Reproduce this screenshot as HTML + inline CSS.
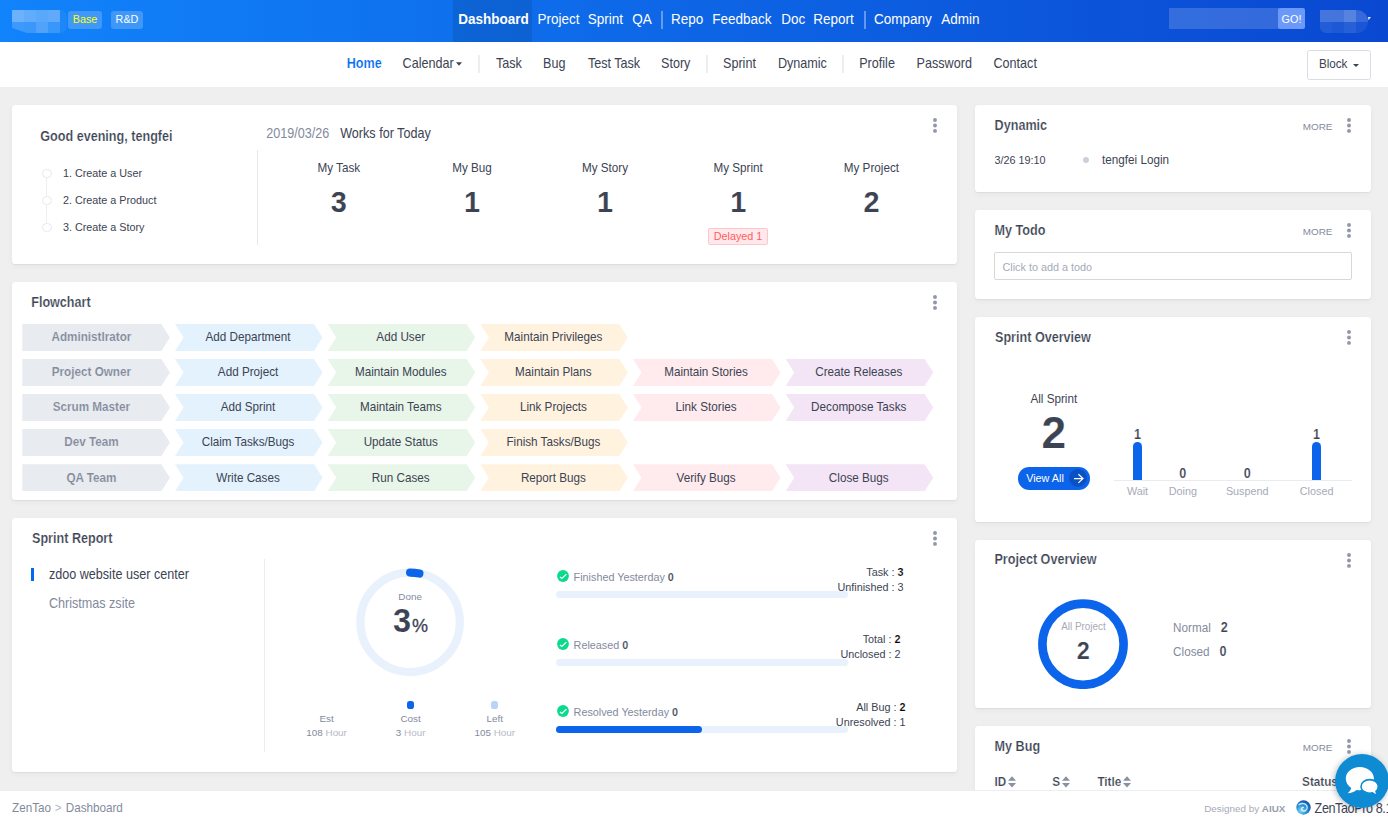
<!DOCTYPE html>
<html lang="en">
<head>
<meta charset="utf-8">
<title>Dashboard - ZenTao</title>
<style>
*{box-sizing:border-box}
html,body{margin:0;padding:0}
body{width:1388px;height:820px;overflow:hidden;position:relative;background:#efefef;color:#3c4353;font-family:"Liberation Sans",Arial,sans-serif;font-size:11.7px;line-height:1.2}
a{color:inherit;text-decoration:none}
ul{list-style:none;margin:0;padding:0}
.abs{position:absolute;white-space:nowrap}
b,strong{font-weight:bold}

/* header */
#header{position:absolute;left:0;top:0;width:1388px;height:42px;background:linear-gradient(90deg,#1183fb 0%,#0a48d1 100%)}
#logo{position:absolute;left:12px;top:10px;width:55px;height:23px;overflow:hidden;clip-path:polygon(0 0,100% 0,100% 100%,15px 100%,0 18px)}
#logo i{position:absolute;display:block}
.hbadge{position:absolute;top:11px;height:18px;line-height:16.4px;border-radius:3px;background:rgba(255,255,255,.2);font-size:10.8px;text-align:center;color:#fff}
#navbar{position:absolute;left:0;top:0;height:42px;font-size:13.5px;color:#fff}
#navbar li{display:block;position:absolute;top:0;height:42px;line-height:38px;white-space:nowrap}
#navbar li a{display:block;height:42px;transform:translateY(.45px) scaleY(1.11);transform-origin:50% 19px}
#navbar li.active{background:rgba(0,0,0,.1);font-weight:bold}
#navbar li.divider{width:2px;height:18px;top:11px;background:rgba(255,255,255,.36)}
#searchbox{position:absolute;left:1169px;top:8px;width:110px;height:21px;background:rgba(255,255,255,.17)}
#searchgo{position:absolute;left:1278px;top:8px;width:27px;height:21px;background:#6b99fa;border-radius:2px;color:#fff;font-size:10.8px;line-height:22px;text-align:center}
#userblur{position:absolute;left:1320px;top:10px;width:48.4px;height:23px;overflow:hidden;border-radius:0 12px 12px 6px}
#userblur i{position:absolute;display:block}

/* sub nav */
#subHeader{position:absolute;left:0;top:42px;width:1388px;height:45px;background:#fff}
#subNavbar{position:absolute;left:0;top:0;height:45px;font-size:12.6px;color:#3c4353}
#subNavbar li{display:block;position:absolute;top:0;height:45px;line-height:43px;white-space:nowrap}
#subNavbar li a{display:block;height:45px;transform:translateY(.5px) scaleY(1.11);transform-origin:50% 21.5px}
#subNavbar li.active a{color:#006af1;font-weight:bold;-webkit-text-stroke:.18px #fff}
#subNavbar li.divider{width:2px;height:18px;top:13px;background:#eee}
.caret{display:inline-block;width:0;height:0;border-left:3.6px solid transparent;border-right:3.6px solid transparent;border-top:3.6px solid currentColor;vertical-align:middle;margin-left:2px}
#blockBtn{position:absolute;left:1307px;top:8px;width:64px;height:30px;border:1px solid #dadde5;border-radius:2.5px;background:#fff;font-size:11.7px;line-height:25.4px;text-align:center;color:#3c4353}
#blockBtn span.tx{display:inline-block;transform:scaleY(1.11)}

/* panels */
.panel{position:absolute;background:#fff;border-radius:3.6px;box-shadow:0 1px 1px rgba(0,0,0,.05),0 2px 6px 0 rgba(0,0,0,.045)}
.panel-title{position:absolute;font-weight:bold;font-size:12.6px;color:#3c4353;white-space:nowrap;line-height:16px}
.more{position:absolute;font-size:9.9px;color:#838a9d;line-height:12px;letter-spacing:0}
.dots{position:absolute;fill:#9196a8;overflow:visible}


.flow-item{font-size:11.7px;line-height:27px;text-align:center;white-space:nowrap;color:#3c4353}
.flow-item span{display:inline-block;transform:translateY(-1.1px) scaleY(1.11);transform-origin:50% 50%}
.sort{display:inline-block;position:relative;width:8px;height:10px;margin-left:2px;vertical-align:-1px}
.sort:before,.sort:after{content:"";position:absolute;left:0;width:0;height:0;border-left:4px solid transparent;border-right:4px solid transparent}
.sort:before{top:0;border-bottom:4.2px solid #8a90a3}
.sort:after{bottom:0;border-top:4.2px solid #8a90a3}
h4{margin:0}
/* footer */
#footer{position:absolute;left:0;top:790px;width:1388px;height:30px;background:#fff;border-top:1px solid #eceef3;font-size:11.7px;color:#838a9d}
#chat{position:absolute;left:1335.2px;top:754px;width:54px;height:54px;border-radius:50%;box-shadow:-1px 1px 6px rgba(0,0,0,.28)}
#chat svg{display:block}
</style>
</head>
<body>
<div id="header">
  <div id="logo"><i style="left:0px;top:0px;width:12px;height:12px;background:rgba(255,255,255,0.38)"></i><i style="left:12px;top:0px;width:12px;height:12px;background:rgba(255,255,255,0.34)"></i><i style="left:24px;top:0px;width:12px;height:12px;background:rgba(255,255,255,0.31)"></i><i style="left:36px;top:0px;width:12px;height:12px;background:rgba(255,255,255,0.33)"></i><i style="left:0px;top:12px;width:12px;height:11px;background:rgba(255,255,255,0.19)"></i><i style="left:12px;top:12px;width:12px;height:11px;background:rgba(255,255,255,0.18)"></i><i style="left:24px;top:12px;width:12px;height:11px;background:rgba(255,255,255,0.265)"></i><i style="left:36px;top:12px;width:12px;height:11px;background:rgba(255,255,255,0.17)"></i><i style="left:48px;top:0;width:7px;height:23px;background:rgba(255,255,255,.05);border-radius:0 7px 7px 0"></i></div>
  <a class="hbadge" style="left:68px;width:34px;color:#ffff00">Base</a>
  <a class="hbadge" style="left:111px;width:32px">R&amp;D</a>
  <ul id="navbar">
    <li class="active" style="left:453px;width:78.9px;padding-left:5.2px"><a>Dashboard</a></li>
    <li style="left:537.4px"><a>Project</a></li>
    <li style="left:587.8px"><a>Sprint</a></li>
    <li style="left:632.3px"><a>QA</a></li>
    <li class="divider" style="left:661px"></li>
    <li style="left:671.1px"><a>Repo</a></li>
    <li style="left:712.2px"><a>Feedback</a></li>
    <li style="left:781.2px"><a>Doc</a></li>
    <li style="left:813.3px"><a>Report</a></li>
    <li class="divider" style="left:864px"></li>
    <li style="left:873.9px"><a>Company</a></li>
    <li style="left:941.2px"><a>Admin</a></li>
  </ul>
  <div id="searchbox"></div>
  <a id="searchgo">GO!</a>
  <div id="userblur"><i style="left:0.0px;top:0px;width:12.1px;height:12px;background:rgba(255,255,255,0.24)"></i><i style="left:12.1px;top:0px;width:12.1px;height:12px;background:rgba(255,255,255,0.24)"></i><i style="left:24.2px;top:0px;width:12.1px;height:12px;background:rgba(255,255,255,0.315)"></i><i style="left:36.3px;top:0px;width:12.1px;height:12px;background:rgba(255,255,255,0.18)"></i><i style="left:0.0px;top:12px;width:12.1px;height:11px;background:rgba(255,255,255,0.1)"></i><i style="left:12.1px;top:12px;width:12.1px;height:11px;background:rgba(255,255,255,0.08)"></i><i style="left:24.2px;top:12px;width:12.1px;height:11px;background:rgba(255,255,255,0.12)"></i><i style="left:36.3px;top:12px;width:12.1px;height:11px;background:rgba(255,255,255,0.07)"></i></div>
  <svg class="abs" style="left:1367px;top:16px" width="6" height="6" viewBox="0 0 6 6"><path d="M0.8 1.1 H4 L1.6 4.3 Z" fill="#dfe8fb"/></svg>
</div>

<div id="subHeader">
  <ul id="subNavbar">
    <li class="active" style="left:346.7px"><a>Home</a></li>
    <li style="left:402.6px"><a>Calendar<span class="caret"></span></a></li>
    <li class="divider" style="left:477.9px"></li>
    <li style="left:495.9px"><a>Task</a></li>
    <li style="left:543px"><a>Bug</a></li>
    <li style="left:587.9px"><a>Test Task</a></li>
    <li style="left:661px"><a>Story</a></li>
    <li class="divider" style="left:705.9px"></li>
    <li style="left:723px"><a>Sprint</a></li>
    <li style="left:777.9px"><a>Dynamic</a></li>
    <li class="divider" style="left:842.1px"></li>
    <li style="left:859.2px"><a>Profile</a></li>
    <li style="left:916.6px"><a>Password</a></li>
    <li style="left:993.5px"><a>Contact</a></li>
  </ul>
  <a id="blockBtn"><span class="tx">Block</span> <span class="caret" style="margin-left:2.4px;vertical-align:1px"></span></a>
</div>


<div id="main">
<div class="panel block-welcome" style="left:12px;top:105px;width:945px;height:159px">
<h4 class="abs" style="top:23.20px;font-size:12.6px;line-height:16px;color:#3c4353;font-weight:bold;-webkit-text-stroke:0.18px #fff;left:28.30px;transform:translateY(0.9px) scaleY(1.11);transform-origin:50% 50%;margin:0;">Good evening, tengfei</h4>
<div style="position:absolute;left:34.30px;top:68.00px;width:1.00px;height:54.00px;background:#eee"></div>
<ul class="tutorial">
<li><i style="position:absolute;left:30.00px;top:63.60px;width:9.60px;height:9.60px;border:1px solid #e9e9e9;border-radius:50%;background:#fff"></i><span class="abs" style="top:60.00px;font-size:10.8px;line-height:16px;color:#3c4353;left:50.90px;">1. Create a User</span></li>
<li><i style="position:absolute;left:30.00px;top:90.60px;width:9.60px;height:9.60px;border:1px solid #e9e9e9;border-radius:50%;background:#fff"></i><span class="abs" style="top:87.00px;font-size:10.8px;line-height:16px;color:#3c4353;left:50.90px;">2. Create a Product</span></li>
<li><i style="position:absolute;left:30.00px;top:117.60px;width:9.60px;height:9.60px;border:1px solid #e9e9e9;border-radius:50%;background:#fff"></i><span class="abs" style="top:114.00px;font-size:10.8px;line-height:16px;color:#3c4353;left:50.90px;">3. Create a Story</span></li>
</ul>
<div style="position:absolute;left:245.00px;top:45.00px;width:1.00px;height:95.00px;background:#e5e8ec"></div>
<span class="abs" style="top:20.30px;font-size:12.6px;line-height:16px;color:#838a9d;left:254.20px;transform:translateY(0.9px) scaleY(1.11);transform-origin:50% 50%;">2019/03/26</span>
<span class="abs" style="top:20.30px;font-size:12.6px;line-height:16px;color:#3c4353;left:328.20px;transform:translateY(0.9px) scaleY(1.11);transform-origin:50% 50%;">Works for Today</span>
<div class="tile"><span class="abs" style="top:53.80px;font-size:11.7px;line-height:16px;color:#3c4353;left:126.80px;width:400px;text-align:center;transform:translateY(0.9px) scaleY(1.11);transform-origin:50% 50%;">My Task</span><strong class="abs" style="top:78.70px;font-size:28.8px;line-height:34px;color:#3c4353;font-weight:bold;-webkit-text-stroke:0.12px #fff;left:126.80px;width:400px;text-align:center;transform:translateY(0.9px) scaleY(1.05);transform-origin:50% 50%;">3</strong></div>
<div class="tile"><span class="abs" style="top:53.80px;font-size:11.7px;line-height:16px;color:#3c4353;left:260.00px;width:400px;text-align:center;transform:translateY(0.9px) scaleY(1.11);transform-origin:50% 50%;">My Bug</span><strong class="abs" style="top:78.70px;font-size:28.8px;line-height:34px;color:#3c4353;font-weight:bold;-webkit-text-stroke:0.12px #fff;left:260.00px;width:400px;text-align:center;transform:translateY(0.9px) scaleY(1.05);transform-origin:50% 50%;">1</strong></div>
<div class="tile"><span class="abs" style="top:53.80px;font-size:11.7px;line-height:16px;color:#3c4353;left:393.00px;width:400px;text-align:center;transform:translateY(0.9px) scaleY(1.11);transform-origin:50% 50%;">My Story</span><strong class="abs" style="top:78.70px;font-size:28.8px;line-height:34px;color:#3c4353;font-weight:bold;-webkit-text-stroke:0.12px #fff;left:393.00px;width:400px;text-align:center;transform:translateY(0.9px) scaleY(1.05);transform-origin:50% 50%;">1</strong></div>
<div class="tile"><span class="abs" style="top:53.80px;font-size:11.7px;line-height:16px;color:#3c4353;left:526.20px;width:400px;text-align:center;transform:translateY(0.9px) scaleY(1.11);transform-origin:50% 50%;">My Sprint</span><strong class="abs" style="top:78.70px;font-size:28.8px;line-height:34px;color:#3c4353;font-weight:bold;-webkit-text-stroke:0.12px #fff;left:526.20px;width:400px;text-align:center;transform:translateY(0.9px) scaleY(1.05);transform-origin:50% 50%;">1</strong></div>
<div class="tile"><span class="abs" style="top:53.80px;font-size:11.7px;line-height:16px;color:#3c4353;left:659.40px;width:400px;text-align:center;transform:translateY(0.9px) scaleY(1.11);transform-origin:50% 50%;">My Project</span><strong class="abs" style="top:78.70px;font-size:28.8px;line-height:34px;color:#3c4353;font-weight:bold;-webkit-text-stroke:0.12px #fff;left:659.40px;width:400px;text-align:center;transform:translateY(0.9px) scaleY(1.05);transform-origin:50% 50%;">2</strong></div>
<span style="position:absolute;left:696.00px;top:123.00px;width:60.00px;height:17.00px;border:1px solid #ffc6c9;background:#ffe9ec;border-radius:2px;color:#ff5d5d;font-size:10.8px;line-height:15px;text-align:center">Delayed 1</span>
<svg class="dots" style="left:919.70px;top:12.20px" width="6" height="17" viewBox="0 0 6 17"><circle cx="3" cy="3" r="1.95"/><circle cx="3" cy="8.45" r="1.95"/><circle cx="3" cy="13.9" r="1.95"/></svg>
</div>
<div class="panel block-flowchart" style="left:12px;top:282px;width:945px;height:218px">
<h4 class="abs" style="top:12.30px;font-size:12.6px;line-height:16px;color:#3c4353;font-weight:bold;-webkit-text-stroke:0.18px #fff;left:19.20px;transform:translateY(0.9px) scaleY(1.11);transform-origin:50% 50%;margin:0;">Flowchart</h4>
<div class="flow-row">
<div class="flow-item" style="position:absolute;left:10.30px;top:42.00px;width:147.60px;height:27.00px;background:#e8ebef;clip-path:polygon(0 0,139px 0,147.6px 50%,139px 100%,0 100%);color:#838a9d;font-weight:bold;-webkit-text-stroke:.12px #e8ebef;padding-right:9.4px;"><span>AdministIrator</span></div>
<div class="flow-item" style="position:absolute;left:162.97px;top:42.00px;width:147.60px;height:27.00px;background:#e3f2fd;clip-path:polygon(0 0,139px 0,147.6px 50%,139px 100%,0 100%,8.6px 50%);padding-left:7.2px;padding-right:8.6px;"><span>Add Department</span></div>
<div class="flow-item" style="position:absolute;left:315.64px;top:42.00px;width:147.60px;height:27.00px;background:#e8f5e9;clip-path:polygon(0 0,139px 0,147.6px 50%,139px 100%,0 100%,8.6px 50%);padding-left:7.2px;padding-right:8.6px;"><span>Add User</span></div>
<div class="flow-item" style="position:absolute;left:468.31px;top:42.00px;width:147.60px;height:27.00px;background:#fff3e0;clip-path:polygon(0 0,139px 0,147.6px 50%,139px 100%,0 100%,8.6px 50%);padding-left:7.2px;padding-right:8.6px;"><span>Maintain Privileges</span></div>
</div>
<div class="flow-row">
<div class="flow-item" style="position:absolute;left:10.30px;top:77.00px;width:147.60px;height:27.00px;background:#e8ebef;clip-path:polygon(0 0,139px 0,147.6px 50%,139px 100%,0 100%);color:#838a9d;font-weight:bold;-webkit-text-stroke:.12px #e8ebef;padding-right:9.4px;"><span>Project Owner</span></div>
<div class="flow-item" style="position:absolute;left:162.97px;top:77.00px;width:147.60px;height:27.00px;background:#e3f2fd;clip-path:polygon(0 0,139px 0,147.6px 50%,139px 100%,0 100%,8.6px 50%);padding-left:7.2px;padding-right:8.6px;"><span>Add Project</span></div>
<div class="flow-item" style="position:absolute;left:315.64px;top:77.00px;width:147.60px;height:27.00px;background:#e8f5e9;clip-path:polygon(0 0,139px 0,147.6px 50%,139px 100%,0 100%,8.6px 50%);padding-left:7.2px;padding-right:8.6px;"><span>Maintain Modules</span></div>
<div class="flow-item" style="position:absolute;left:468.31px;top:77.00px;width:147.60px;height:27.00px;background:#fff3e0;clip-path:polygon(0 0,139px 0,147.6px 50%,139px 100%,0 100%,8.6px 50%);padding-left:7.2px;padding-right:8.6px;"><span>Maintain Plans</span></div>
<div class="flow-item" style="position:absolute;left:620.98px;top:77.00px;width:147.60px;height:27.00px;background:#ffebee;clip-path:polygon(0 0,139px 0,147.6px 50%,139px 100%,0 100%,8.6px 50%);padding-left:7.2px;padding-right:8.6px;"><span>Maintain Stories</span></div>
<div class="flow-item" style="position:absolute;left:773.65px;top:77.00px;width:147.60px;height:27.00px;background:#f3e5f5;clip-path:polygon(0 0,139px 0,147.6px 50%,139px 100%,0 100%,8.6px 50%);padding-left:7.2px;padding-right:8.6px;"><span>Create Releases</span></div>
</div>
<div class="flow-row">
<div class="flow-item" style="position:absolute;left:10.30px;top:112.00px;width:147.60px;height:27.00px;background:#e8ebef;clip-path:polygon(0 0,139px 0,147.6px 50%,139px 100%,0 100%);color:#838a9d;font-weight:bold;-webkit-text-stroke:.12px #e8ebef;padding-right:9.4px;"><span>Scrum Master</span></div>
<div class="flow-item" style="position:absolute;left:162.97px;top:112.00px;width:147.60px;height:27.00px;background:#e3f2fd;clip-path:polygon(0 0,139px 0,147.6px 50%,139px 100%,0 100%,8.6px 50%);padding-left:7.2px;padding-right:8.6px;"><span>Add Sprint</span></div>
<div class="flow-item" style="position:absolute;left:315.64px;top:112.00px;width:147.60px;height:27.00px;background:#e8f5e9;clip-path:polygon(0 0,139px 0,147.6px 50%,139px 100%,0 100%,8.6px 50%);padding-left:7.2px;padding-right:8.6px;"><span>Maintain Teams</span></div>
<div class="flow-item" style="position:absolute;left:468.31px;top:112.00px;width:147.60px;height:27.00px;background:#fff3e0;clip-path:polygon(0 0,139px 0,147.6px 50%,139px 100%,0 100%,8.6px 50%);padding-left:7.2px;padding-right:8.6px;"><span>Link Projects</span></div>
<div class="flow-item" style="position:absolute;left:620.98px;top:112.00px;width:147.60px;height:27.00px;background:#ffebee;clip-path:polygon(0 0,139px 0,147.6px 50%,139px 100%,0 100%,8.6px 50%);padding-left:7.2px;padding-right:8.6px;"><span>Link Stories</span></div>
<div class="flow-item" style="position:absolute;left:773.65px;top:112.00px;width:147.60px;height:27.00px;background:#f3e5f5;clip-path:polygon(0 0,139px 0,147.6px 50%,139px 100%,0 100%,8.6px 50%);padding-left:7.2px;padding-right:8.6px;"><span>Decompose Tasks</span></div>
</div>
<div class="flow-row">
<div class="flow-item" style="position:absolute;left:10.30px;top:147.00px;width:147.60px;height:27.00px;background:#e8ebef;clip-path:polygon(0 0,139px 0,147.6px 50%,139px 100%,0 100%);color:#838a9d;font-weight:bold;-webkit-text-stroke:.12px #e8ebef;padding-right:9.4px;"><span>Dev Team</span></div>
<div class="flow-item" style="position:absolute;left:162.97px;top:147.00px;width:147.60px;height:27.00px;background:#e3f2fd;clip-path:polygon(0 0,139px 0,147.6px 50%,139px 100%,0 100%,8.6px 50%);padding-left:7.2px;padding-right:8.6px;"><span>Claim Tasks/Bugs</span></div>
<div class="flow-item" style="position:absolute;left:315.64px;top:147.00px;width:147.60px;height:27.00px;background:#e8f5e9;clip-path:polygon(0 0,139px 0,147.6px 50%,139px 100%,0 100%,8.6px 50%);padding-left:7.2px;padding-right:8.6px;"><span>Update Status</span></div>
<div class="flow-item" style="position:absolute;left:468.31px;top:147.00px;width:147.60px;height:27.00px;background:#fff3e0;clip-path:polygon(0 0,139px 0,147.6px 50%,139px 100%,0 100%,8.6px 50%);padding-left:7.2px;padding-right:8.6px;"><span>Finish Tasks/Bugs</span></div>
</div>
<div class="flow-row">
<div class="flow-item" style="position:absolute;left:10.30px;top:182.30px;width:147.60px;height:27.00px;background:#e8ebef;clip-path:polygon(0 0,139px 0,147.6px 50%,139px 100%,0 100%);color:#838a9d;font-weight:bold;-webkit-text-stroke:.12px #e8ebef;padding-right:9.4px;"><span style="transform:translateY(-0.2px) scaleY(1.11)">QA Team</span></div>
<div class="flow-item" style="position:absolute;left:162.97px;top:182.30px;width:147.60px;height:27.00px;background:#e3f2fd;clip-path:polygon(0 0,139px 0,147.6px 50%,139px 100%,0 100%,8.6px 50%);padding-left:7.2px;padding-right:8.6px;"><span style="transform:translateY(-0.2px) scaleY(1.11)">Write Cases</span></div>
<div class="flow-item" style="position:absolute;left:315.64px;top:182.30px;width:147.60px;height:27.00px;background:#e8f5e9;clip-path:polygon(0 0,139px 0,147.6px 50%,139px 100%,0 100%,8.6px 50%);padding-left:7.2px;padding-right:8.6px;"><span style="transform:translateY(-0.2px) scaleY(1.11)">Run Cases</span></div>
<div class="flow-item" style="position:absolute;left:468.31px;top:182.30px;width:147.60px;height:27.00px;background:#fff3e0;clip-path:polygon(0 0,139px 0,147.6px 50%,139px 100%,0 100%,8.6px 50%);padding-left:7.2px;padding-right:8.6px;"><span style="transform:translateY(-0.2px) scaleY(1.11)">Report Bugs</span></div>
<div class="flow-item" style="position:absolute;left:620.98px;top:182.30px;width:147.60px;height:27.00px;background:#ffebee;clip-path:polygon(0 0,139px 0,147.6px 50%,139px 100%,0 100%,8.6px 50%);padding-left:7.2px;padding-right:8.6px;"><span style="transform:translateY(-0.2px) scaleY(1.11)">Verify Bugs</span></div>
<div class="flow-item" style="position:absolute;left:773.65px;top:182.30px;width:147.60px;height:27.00px;background:#f3e5f5;clip-path:polygon(0 0,139px 0,147.6px 50%,139px 100%,0 100%,8.6px 50%);padding-left:7.2px;padding-right:8.6px;"><span style="transform:translateY(-0.2px) scaleY(1.11)">Close Bugs</span></div>
</div>
<svg class="dots" style="left:919.70px;top:12.20px" width="6" height="17" viewBox="0 0 6 17"><circle cx="3" cy="3" r="1.95"/><circle cx="3" cy="8.45" r="1.95"/><circle cx="3" cy="13.9" r="1.95"/></svg>
</div>
<div class="panel block-statistic" style="left:12px;top:518px;width:945px;height:254px">
<h4 class="abs" style="top:12.30px;font-size:12.6px;line-height:16px;color:#3c4353;font-weight:bold;-webkit-text-stroke:0.18px #fff;left:20.00px;transform:translateY(0.9px) scaleY(1.11);transform-origin:50% 50%;margin:0;">Sprint Report</h4>
<div style="position:absolute;left:19.00px;top:50.00px;width:3.00px;height:13.00px;background:#006af1"></div>
<span class="abs" style="top:47.60px;font-size:12.6px;line-height:16px;color:#3c4353;left:36.90px;transform:translateY(0.9px) scaleY(1.11);transform-origin:50% 50%;">zdoo website user center</span>
<span class="abs" style="top:77.30px;font-size:12.6px;line-height:16px;color:#838a9d;left:36.90px;transform:translateY(0.9px) scaleY(1.11);transform-origin:50% 50%;">Christmas zsite</span>
<div style="position:absolute;left:252.00px;top:41.00px;width:1.00px;height:193.00px;background:#e8ecf3"></div>
<svg class="abs" style="left:0;top:0" width="945" height="254" viewBox="0 0 945 254"><circle cx="398.10" cy="104.30" r="49.7" fill="none" stroke="#e8f1fc" stroke-width="8.2"/><path d="M398.10 54.60 A49.7 49.7 0 0 1 407.41 55.48" fill="none" stroke="#0c64eb" stroke-width="8.2" stroke-linecap="round"/></svg>
<span class="abs" style="top:70.80px;font-size:9.9px;line-height:16px;color:#838a9d;left:198.10px;width:400px;text-align:center;">Done</span>
<span class="abs" style="left:381.00px;top:82.80px;line-height:40px;font-weight:bold;font-size:32.4px;color:#3c4353;letter-spacing:-0.5px;-webkit-text-stroke:.12px #fff">3<small style="font-size:18px;font-weight:normal;letter-spacing:0;margin-left:1.6px;-webkit-text-stroke:.3px #3c4353">%</small></span>
<div style="position:absolute;left:394.80px;top:183.40px;width:7.20px;height:7.20px;background:#0c64eb;border-radius:2.8px"></div>
<div style="position:absolute;left:478.80px;top:183.40px;width:7.20px;height:7.20px;background:#b8d5f7;border-radius:2.8px"></div>
<span class="abs" style="top:192.90px;font-size:9.9px;line-height:16px;color:#838a9d;left:114.60px;width:400px;text-align:center;">Est</span>
<span class="abs" style="top:206.70px;font-size:9.9px;line-height:16px;color:#838a9d;left:114.60px;width:400px;text-align:center;">108 <span style="color:#b5b9c5">Hour</span></span>
<span class="abs" style="top:192.90px;font-size:9.9px;line-height:16px;color:#838a9d;left:198.60px;width:400px;text-align:center;">Cost</span>
<span class="abs" style="top:206.70px;font-size:9.9px;line-height:16px;color:#838a9d;left:198.60px;width:400px;text-align:center;">3 <span style="color:#b5b9c5">Hour</span></span>
<span class="abs" style="top:192.90px;font-size:9.9px;line-height:16px;color:#838a9d;left:282.80px;width:400px;text-align:center;">Left</span>
<span class="abs" style="top:206.70px;font-size:9.9px;line-height:16px;color:#838a9d;left:282.80px;width:400px;text-align:center;">105 <span style="color:#b5b9c5">Hour</span></span>
<svg width="12" height="12" viewBox="0 0 12 12" style="position:absolute;left:544.65px;top:52.35px"><circle cx="6" cy="6" r="5.9" fill="#0bd98b"/><path d="M2.9 6.9 L4.9 8.4 L9.4 4.1" fill="none" stroke="#fff" stroke-width="1.25" stroke-linejoin="miter"/></svg>
<span class="abs" style="top:50.80px;font-size:10.8px;line-height:16px;color:#838a9d;left:561.60px;">Finished Yesterday <b style="color:#3c4353;-webkit-text-stroke:.18px #fff">0</b></span>
<div style="position:absolute;left:543.80px;top:73.00px;width:292.00px;height:7.00px;background:#e8f1fc;border-radius:3.5px"></div>
<div class="abs" style="left:758.50px;top:46.90px;width:200px;text-align:center;font-size:10.8px;line-height:14.8px"><span style="display:inline-block;text-align:right">Task : <b style='color:#000;-webkit-text-stroke:.18px #fff'>3</b><br>Unfinished : 3</span></div>
<svg width="12" height="12" viewBox="0 0 12 12" style="position:absolute;left:544.65px;top:120.25px"><circle cx="6" cy="6" r="5.9" fill="#0bd98b"/><path d="M2.9 6.9 L4.9 8.4 L9.4 4.1" fill="none" stroke="#fff" stroke-width="1.25" stroke-linejoin="miter"/></svg>
<span class="abs" style="top:118.70px;font-size:10.8px;line-height:16px;color:#838a9d;left:561.60px;">Released <b style="color:#3c4353;-webkit-text-stroke:.18px #fff">0</b></span>
<div style="position:absolute;left:543.80px;top:140.90px;width:292.00px;height:7.00px;background:#e8f1fc;border-radius:3.5px"></div>
<div class="abs" style="left:758.50px;top:113.80px;width:200px;text-align:center;font-size:10.8px;line-height:14.8px"><span style="display:inline-block;text-align:right">Total : <b style='color:#000;-webkit-text-stroke:.18px #fff'>2</b><br>Unclosed : 2</span></div>
<svg width="12" height="12" viewBox="0 0 12 12" style="position:absolute;left:544.65px;top:187.45px"><circle cx="6" cy="6" r="5.9" fill="#0bd98b"/><path d="M2.9 6.9 L4.9 8.4 L9.4 4.1" fill="none" stroke="#fff" stroke-width="1.25" stroke-linejoin="miter"/></svg>
<span class="abs" style="top:185.90px;font-size:10.8px;line-height:16px;color:#838a9d;left:561.60px;">Resolved Yesterday <b style="color:#3c4353;-webkit-text-stroke:.18px #fff">0</b></span>
<div style="position:absolute;left:543.80px;top:208.10px;width:292.00px;height:7.00px;background:#e8f1fc;border-radius:3.5px"><div style="width:50%;height:100%;background:#0c64eb;border-radius:3.5px"></div></div>
<div class="abs" style="left:758.65px;top:182.00px;width:200px;text-align:center;font-size:10.8px;line-height:14.8px"><span style="display:inline-block;text-align:right">All Bug : <b style='color:#000;-webkit-text-stroke:.18px #fff'>2</b><br>Unresolved : 1</span></div>
<svg class="dots" style="left:919.70px;top:12.20px" width="6" height="17" viewBox="0 0 6 17"><circle cx="3" cy="3" r="1.95"/><circle cx="3" cy="8.45" r="1.95"/><circle cx="3" cy="13.9" r="1.95"/></svg>
</div>
<div class="panel block-dynamic" style="left:975px;top:105px;width:396px;height:87px">
<h4 class="abs" style="top:12.30px;font-size:12.6px;line-height:16px;color:#3c4353;font-weight:bold;-webkit-text-stroke:0.18px #fff;left:19.60px;transform:translateY(0.9px) scaleY(1.11);transform-origin:50% 50%;margin:0;">Dynamic</h4>
<span class="abs" style="top:13.00px;font-size:9.9px;line-height:16px;color:#838a9d;left:327.80px;transform:translateY(0.9px) scaleY(1.001);transform-origin:50% 50%;">MORE</span>
<svg class="dots" style="left:371.00px;top:12.20px" width="6" height="17" viewBox="0 0 6 17"><circle cx="3" cy="3" r="1.95"/><circle cx="3" cy="8.45" r="1.95"/><circle cx="3" cy="13.9" r="1.95"/></svg>
<span class="abs" style="top:47.00px;font-size:10.8px;line-height:16px;color:#3c4353;left:19.60px;">3/26 19:10</span>
<div style="position:absolute;left:107.80px;top:52.00px;width:6.20px;height:6.20px;background:#cdd0da;border-radius:50%"></div>
<span class="abs" style="top:46.20px;font-size:11.7px;line-height:16px;color:#3c4353;left:127.10px;transform:translateY(0.9px) scaleY(1.11);transform-origin:50% 50%;">tengfei Login</span>
</div>
<div class="panel block-todo" style="left:975px;top:210px;width:396px;height:89px">
<h4 class="abs" style="top:12.20px;font-size:12.6px;line-height:16px;color:#3c4353;font-weight:bold;-webkit-text-stroke:0.18px #fff;left:19.60px;transform:translateY(0.9px) scaleY(1.11);transform-origin:50% 50%;margin:0;">My Todo</h4>
<span class="abs" style="top:13.00px;font-size:9.9px;line-height:16px;color:#838a9d;left:327.80px;transform:translateY(0.9px) scaleY(1.001);transform-origin:50% 50%;">MORE</span>
<svg class="dots" style="left:371.00px;top:12.20px" width="6" height="17" viewBox="0 0 6 17"><circle cx="3" cy="3" r="1.95"/><circle cx="3" cy="8.45" r="1.95"/><circle cx="3" cy="13.9" r="1.95"/></svg>
<div style="position:absolute;left:19.00px;top:42.00px;width:358.00px;height:28.00px;border:1px solid #d8d8d8;border-radius:2px;background:#fff;font-size:10.8px;line-height:28px;padding-left:7.5px;color:#a6aab8">Click to add a todo</div>
</div>
<div class="panel block-sprint" style="left:975px;top:317px;width:396px;height:205px">
<h4 class="abs" style="top:12.30px;font-size:12.6px;line-height:16px;color:#3c4353;font-weight:bold;-webkit-text-stroke:0.18px #fff;left:20.00px;transform:translateY(0.9px) scaleY(1.11);transform-origin:50% 50%;margin:0;">Sprint Overview</h4>
<svg class="dots" style="left:371.00px;top:12.20px" width="6" height="17" viewBox="0 0 6 17"><circle cx="3" cy="3" r="1.95"/><circle cx="3" cy="8.45" r="1.95"/><circle cx="3" cy="13.9" r="1.95"/></svg>
<span class="abs" style="top:72.80px;font-size:11.7px;line-height:16px;color:#3c4353;left:-121.20px;width:400px;text-align:center;transform:translateY(0.9px) scaleY(1.11);transform-origin:50% 50%;">All Sprint</span>
<strong class="abs" style="top:90.80px;font-size:44.2px;line-height:50px;color:#3c4353;font-weight:bold;-webkit-text-stroke:0.18px #fff;left:-121.10px;width:400px;text-align:center;">2</strong>
<a style="position:absolute;left:43.00px;top:150.20px;width:72.00px;height:22.60px;background:#0c64eb;border-radius:11.3px;color:#fff;font-size:10.8px;line-height:22px;padding-left:8.2px">View All<svg width="18" height="18" viewBox="0 0 18 18" style="position:absolute;right:3px;top:2.3px"><circle cx="9" cy="9" r="9" fill="#0a52c4"/><path d="M5 9.55 H13.8 M9.4 5.2 L14 9.55 L9.4 13.9" fill="none" stroke="#fff" stroke-width="1.2" stroke-linecap="butt" stroke-linejoin="miter"/></svg></a>
<div style="position:absolute;left:139.00px;top:162.70px;width:238.00px;height:1.00px;background:#e8ebf1"></div>
<div style="position:absolute;left:158.00px;top:125.00px;width:9.00px;height:38.00px;background:#0c64eb;border-radius:4.5px 4.5px 0 0"></div>
<span class="abs" style="top:109.20px;font-size:12.6px;line-height:16px;color:#3c4353;font-weight:bold;-webkit-text-stroke:0.18px #fff;left:-37.50px;width:400px;text-align:center;transform:translateY(0.9px) scaleY(1.11);transform-origin:50% 50%;">1</span>
<span class="abs" style="top:166.40px;font-size:10.8px;line-height:16px;color:#a6aab8;left:-37.50px;width:400px;text-align:center;">Wait</span>
<span class="abs" style="top:148.10px;font-size:12.6px;line-height:16px;color:#3c4353;font-weight:bold;-webkit-text-stroke:0.18px #fff;left:7.80px;width:400px;text-align:center;transform:translateY(0.9px) scaleY(1.11);transform-origin:50% 50%;">0</span>
<span class="abs" style="top:166.40px;font-size:10.8px;line-height:16px;color:#a6aab8;left:7.80px;width:400px;text-align:center;">Doing</span>
<span class="abs" style="top:148.10px;font-size:12.6px;line-height:16px;color:#3c4353;font-weight:bold;-webkit-text-stroke:0.18px #fff;left:72.20px;width:400px;text-align:center;transform:translateY(0.9px) scaleY(1.11);transform-origin:50% 50%;">0</span>
<span class="abs" style="top:166.40px;font-size:10.8px;line-height:16px;color:#a6aab8;left:72.20px;width:400px;text-align:center;">Suspend</span>
<div style="position:absolute;left:337.10px;top:125.00px;width:9.00px;height:38.00px;background:#0c64eb;border-radius:4.5px 4.5px 0 0"></div>
<span class="abs" style="top:109.20px;font-size:12.6px;line-height:16px;color:#3c4353;font-weight:bold;-webkit-text-stroke:0.18px #fff;left:141.60px;width:400px;text-align:center;transform:translateY(0.9px) scaleY(1.11);transform-origin:50% 50%;">1</span>
<span class="abs" style="top:166.40px;font-size:10.8px;line-height:16px;color:#a6aab8;left:141.60px;width:400px;text-align:center;">Closed</span>
</div>
<div class="panel block-project" style="left:975px;top:540px;width:396px;height:168px">
<h4 class="abs" style="top:11.30px;font-size:12.6px;line-height:16px;color:#3c4353;font-weight:bold;-webkit-text-stroke:0.18px #fff;left:19.40px;transform:translateY(0.9px) scaleY(1.11);transform-origin:50% 50%;margin:0;">Project Overview</h4>
<svg class="dots" style="left:371.00px;top:12.20px" width="6" height="17" viewBox="0 0 6 17"><circle cx="3" cy="3" r="1.95"/><circle cx="3" cy="8.45" r="1.95"/><circle cx="3" cy="13.9" r="1.95"/></svg>
<svg class="abs" style="left:63.20px;top:58.80px;overflow:hidden" width="89.8" height="89.8" viewBox="0 0 89.8 89.8"><circle cx="45" cy="45.2" r="40.6" fill="none" stroke="#0c64eb" stroke-width="8.6"/></svg>
<span class="abs" style="top:77.70px;font-size:9.9px;line-height:16px;color:#a6aab8;left:-91.60px;width:400px;text-align:center;transform:translateY(0.9px) scaleY(1.1);transform-origin:50% 50%;">All Project</span>
<strong class="abs" style="top:96.90px;font-size:23.4px;line-height:28px;color:#3c4353;font-weight:bold;-webkit-text-stroke:0.18px #fff;left:-91.80px;width:400px;text-align:center;">2</strong>
<span class="abs" style="top:78.80px;font-size:11.7px;line-height:16px;color:#838a9d;left:198.10px;transform:translateY(0.9px) scaleY(1.11);transform-origin:50% 50%;">Normal</span>
<span class="abs" style="top:79.20px;font-size:12.6px;line-height:16px;color:#3c4353;font-weight:bold;-webkit-text-stroke:0.18px #fff;left:245.80px;transform:translateY(0.9px) scaleY(1.11);transform-origin:50% 50%;">2</span>
<span class="abs" style="top:102.80px;font-size:11.7px;line-height:16px;color:#838a9d;left:198.10px;transform:translateY(0.9px) scaleY(1.11);transform-origin:50% 50%;">Closed</span>
<span class="abs" style="top:103.20px;font-size:12.6px;line-height:16px;color:#3c4353;font-weight:bold;-webkit-text-stroke:0.18px #fff;left:244.40px;transform:translateY(0.9px) scaleY(1.11);transform-origin:50% 50%;">0</span>
</div>
<div class="panel block-bug" style="left:975px;top:726px;width:396px;height:120px">
<h4 class="abs" style="top:12.30px;font-size:12.6px;line-height:16px;color:#3c4353;font-weight:bold;-webkit-text-stroke:0.18px #fff;left:19.60px;transform:translateY(0.9px) scaleY(1.11);transform-origin:50% 50%;margin:0;">My Bug</h4>
<span class="abs" style="top:13.00px;font-size:9.9px;line-height:16px;color:#838a9d;left:327.80px;transform:translateY(0.9px) scaleY(1.001);transform-origin:50% 50%;">MORE</span>
<svg class="dots" style="left:371.00px;top:12.20px" width="6" height="17" viewBox="0 0 6 17"><circle cx="3" cy="3" r="1.95"/><circle cx="3" cy="8.45" r="1.95"/><circle cx="3" cy="13.9" r="1.95"/></svg>
<span class="abs" style="top:46.60px;font-size:11.7px;line-height:16px;color:#3c4353;font-weight:bold;-webkit-text-stroke:0.18px #fff;left:19.60px;transform:translateY(0.9px) scaleY(1.11);transform-origin:50% 50%;">ID<i class="sort"></i></span>
<span class="abs" style="top:46.60px;font-size:11.7px;line-height:16px;color:#3c4353;font-weight:bold;-webkit-text-stroke:0.18px #fff;left:77.20px;transform:translateY(0.9px) scaleY(1.11);transform-origin:50% 50%;">S<i class="sort"></i></span>
<span class="abs" style="top:46.60px;font-size:11.7px;line-height:16px;color:#3c4353;font-weight:bold;-webkit-text-stroke:0.18px #fff;left:122.40px;transform:translateY(0.9px) scaleY(1.11);transform-origin:50% 50%;">Title<i class="sort"></i></span>
<span class="abs" style="top:46.60px;font-size:11.7px;line-height:16px;color:#3c4353;font-weight:bold;-webkit-text-stroke:0.18px #fff;left:327.10px;transform:translateY(0.9px) scaleY(1.11);transform-origin:50% 50%;">Status<i class="sort"></i></span>
</div>
</div>


<div id="footer">
  <span class="abs" style="left:12px;top:8.6px;line-height:16px;transform:scaleY(1.11)">ZenTao<span style="color:#b3b7c3;margin:0 4.2px 0 3.7px">&gt;</span>Dashboard</span>
  <span class="abs" style="left:1204.2px;top:9.5px;line-height:16px;font-size:9.9px;color:#a6aab8;transform:scaleY(1.001)">Designed by <b style="color:#9a9fae">AIUX</b></span>
  <svg class="abs" style="left:1295.6px;top:8.7px" width="15" height="15" viewBox="0 0 15 15">
    <defs>
      <radialGradient id="zg" cx="35%" cy="70%" r="75%"><stop offset="0" stop-color="#8fdcf5"/><stop offset=".45" stop-color="#2f96d8"/><stop offset="1" stop-color="#0f4fa8"/></radialGradient>
    </defs>
    <circle cx="7.5" cy="7.5" r="7.2" fill="url(#zg)"/>
    <path d="M3 4.8 C5.5 2.6 10.6 3.2 11.2 7.2 C11.6 10.4 8 12 6.2 10.2 C5 9 5.8 7.2 7.4 7.4" fill="none" stroke="#e8f8ff" stroke-opacity=".85" stroke-width="1.3" stroke-linecap="round"/>
  </svg>
  <span class="abs" style="left:1314.6px;top:8.4px;line-height:16px;font-size:12.6px;letter-spacing:-.4px;color:#3c4353;transform:translateY(1.5px) scaleY(1.11)">ZenTaoPro 8.1.3</span>
</div>
<div id="chat">
  <svg width="54" height="54" viewBox="0 0 54 54">
    <circle cx="27" cy="27" r="27" fill="#0f8bd4"/>
    <path d="M24.8 12.9 C16.9 12.9 10.8 18 10.8 24.6 C10.8 28.5 12.9 31.9 16.2 34 C15.8 36 14.6 37.8 12.7 39.2 C16.2 39 19.3 37.9 21.6 35.9 C22.6 36.1 23.7 36.2 24.8 36.2 C32.6 36.2 38.9 31.2 38.9 24.6 C38.9 18 32.6 12.9 24.8 12.9 Z" fill="#fff"/>
    <path d="M34.6 25.6 C29.8 25.6 26 28.6 26 32.4 C26 36.2 29.8 39.2 34.6 39.2 C35.6 39.2 36.6 39.1 37.4 38.8 C38.8 40.1 40.6 40.9 42.9 41.1 C41.9 40.1 41.2 38.8 41 37.4 C42.4 36.2 43.3 34.4 43.3 32.4 C43.3 28.6 39.4 25.6 34.6 25.6 Z" fill="#fff" stroke="#0f8bd4" stroke-width="1.6"/>
  </svg>
</div>
</body>
</html>
